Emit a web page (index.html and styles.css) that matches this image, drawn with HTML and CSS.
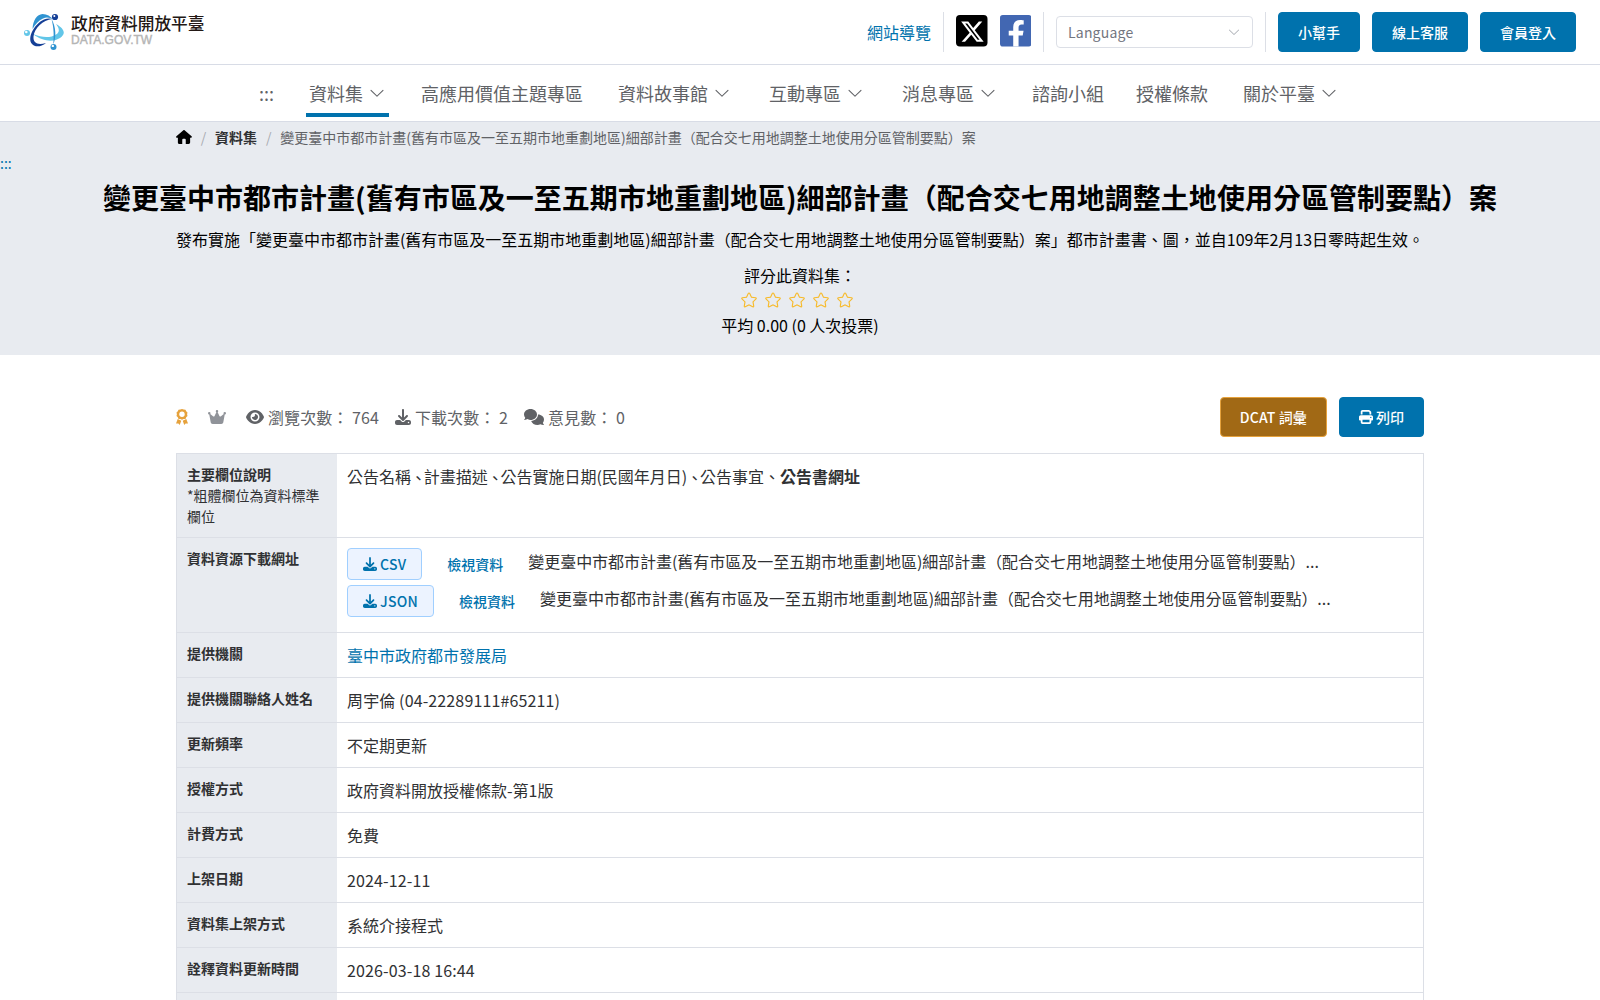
FILE: index.html
```html
<!DOCTYPE html>
<html lang="zh-Hant-TW">
<head>
    <meta charset="UTF-8">
    <meta name="viewport" content="width=device-width, initial-scale=1.0">
    <title>政府資料開放平臺</title>
    <link rel="stylesheet" href="styles.css">
</head>
<body>
    <!-- Shared icons -->
    <svg class="icon-defs" width="0" height="0" aria-hidden="true">
        <symbol id="icon-arrow" viewBox="0 0 1024 1024">
            <path d="M831.872 340.864 512 652.672 192.128 340.864a30.592 30.592 0 0 0-42.752 0 29.12 29.12 0 0 0 0 41.6L489.664 714.24a32 32 0 0 0 44.672 0l340.288-331.712a29.12 29.12 0 0 0 0-41.728 30.592 30.592 0 0 0-42.752 0z"/>
        </symbol>
        <symbol id="icon-download" viewBox="0 0 512 512">
            <path d="M288 32c0-17.7-14.3-32-32-32s-32 14.3-32 32V274.700l-73.400-73.400c-12.500-12.500-32.800-12.500-45.300 0s-12.500 32.800 0 45.300l128 128c12.500 12.500 32.800 12.500 45.300 0l128-128c12.500-12.500 12.500-32.800 0-45.300s-32.800-12.500-45.300 0L288 274.700V32zM64 352c-35.300 0-64 28.700-64 64v32c0 35.300 28.700 64 64 64H448c35.300 0 64-28.700 64-64V416c0-35.300-28.700-64-64-64H346.500l-45.300 45.300c-25 25-65.500 25-90.500 0L165.500 352H64zm368 56a24 24 0 1 1 0 48 24 24 0 1 1 0-48z"/>
        </symbol>
        <symbol id="icon-star" viewBox="0 0 1024 1024">
            <path d="m512 747.840 228.160 119.936a6.400 6.400 0 0 0 9.280-6.720l-43.520-254.080 184.512-179.904a6.400 6.400 0 0 0-3.520-10.880l-255.104-37.120L517.760 147.904a6.400 6.400 0 0 0-11.520 0L392.192 379.072l-255.104 37.120a6.400 6.400 0 0 0-3.520 10.880L318.080 606.976l-43.584 254.080a6.400 6.400 0 0 0 9.280 6.720L512 747.840zM313.600 924.480a70.400 70.400 0 0 1-102.144-74.240l37.888-220.928L88.960 472.960A70.400 70.400 0 0 1 128 352.896l221.760-32.256 99.200-200.960a70.400 70.400 0 0 1 126.208 0l99.200 200.960 221.824 32.256a70.400 70.400 0 0 1 39.040 120.064L774.720 629.376l37.888 220.928a70.400 70.400 0 0 1-102.144 74.240L512 820.096l-198.400 104.320z"/>
        </symbol>
    </svg>

    <header class="header">
        <a class="logo">
            <svg class="logo-mark" viewBox="0 0 40 38">
                <path d="M8.500 16C9 7 13 1.500 18.500 1c4.500 0 8 2 11 6-4-3-7.500-3-10.500-1.500C14.500 7.500 11.500 11 8.500 16z" fill="#2f93d1"/>
                <path d="M32 11c9 5 10 10 4 14-6 4-17 4-27-4 9 4 18 4 23 0.500 4-2.500 3.500-6 0-10.500z" fill="#62c6e8"/>
                <path d="M28 6C19 7 10.500 15 9.500 23.500c-.5 6.500 4 9 12.500 6.500-5 4-11 4.500-14 1C3 25 10 11 20 6.500c3-1.200 6-1.500 8-.5z" fill="#153f96"/>
                <path d="M27.500 6c4.500 8 5 18 1.800 25.500 0.700-8.500 0.700-16-1.800-25.500z" fill="#2f93d1"/>
                <circle cx="31" cy="4" r="3.100" fill="#153f96"/>
                <circle cx="3" cy="20" r="3" fill="#62c6e8"/>
                <circle cx="29.500" cy="34" r="3" fill="#2f93d1"/>
                <circle cx="30.300" cy="3" r="1" fill="#fff"/>
                <circle cx="2.300" cy="19" r="1.300" fill="#fff"/>
                <circle cx="28.800" cy="32.900" r="1.200" fill="#fff"/>
            </svg>
            <span class="logo-text">
                <span class="logo-name">政府資料開放平臺</span>
                <span class="logo-domain">DATA.GOV.TW</span>
            </span>
        </a>

        <div class="header-tools">
            <a class="link">網站導覽</a>
            <span class="divider"></span>
            <svg class="social" viewBox="0 0 448 448">
                <rect width="448" height="448" rx="56" fill="#000"/>
                <path d="M325 93h49L267 215.500 393 382h-98.700l-77.200-101.100L128.700 382h-49l114.500-131L73.300 93h101.200l69.800 92.300L325 93zm-17.100 259.700h27.100L159.700 120.700h-29.100l177.300 232z" fill="#fff"/>
            </svg>
            <svg class="social" viewBox="0 0 448 448">
                <rect width="448" height="448" rx="40" fill="#4267b2"/>
                <path d="M188 448V292h-64v-67h64v-52c0-66 38-101 97-101 28 0 52 4 52 4v60h-30c-32 0-43 20-43 41v48h71l-12 67h-59v156z" fill="#fff"/>
            </svg>
            <span class="divider"></span>
            <div class="language">
                <span>Language</span>
                <svg class="arrow"><use href="#icon-arrow"/></svg>
            </div>
            <span class="divider"></span>
            <button class="btn">小幫手</button>
            <button class="btn">線上客服</button>
            <button class="btn">會員登入</button>
        </div>
    </header>

    <nav class="nav">
        <a class="nav-item">:::</a>
        <a class="nav-item has-menu active">資料集<svg class="arrow"><use href="#icon-arrow"/></svg></a>
        <a class="nav-item">高應用價值主題專區</a>
        <a class="nav-item has-menu">資料故事館<svg class="arrow"><use href="#icon-arrow"/></svg></a>
        <a class="nav-item has-menu">互動專區<svg class="arrow"><use href="#icon-arrow"/></svg></a>
        <a class="nav-item has-menu">消息專區<svg class="arrow"><use href="#icon-arrow"/></svg></a>
        <a class="nav-item">諮詢小組</a>
        <a class="nav-item">授權條款</a>
        <a class="nav-item has-menu">關於平臺<svg class="arrow"><use href="#icon-arrow"/></svg></a>
    </nav>

    <section class="hero">
        <div class="breadcrumb container">
            <svg class="home" viewBox="0 0 576 512"><path d="M575.800 255.500c0 18-15 32.100-32 32.100h-32l.7 160.200c0 35-24 64.200-56 64.200H352V352c0-17.700-14.300-32-32-32h-64c-17.700 0-32 14.300-32 32v160H120c-35 0-56-28-56-56V287.600H32c-18 0-32-14-32-32.100 0-9 3-17 10-24L266.400 8c7-7 15-8 22-8s15 2 21 7l255.400 224.500c8 7 12 15 11 24z"/></svg>
            <span class="slash">/</span>
            <b>資料集</b>
            <span class="slash">/</span>
            <span>變更臺中市都市計畫(舊有市區及一至五期市地重劃地區)細部計畫（配合交七用地調整土地使用分區管制要點）案</span>
        </div>
        <a class="anchor">:::</a>
        <h1>變更臺中市都市計畫(舊有市區及一至五期市地重劃地區)細部計畫（配合交七用地調整土地使用分區管制要點）案</h1>
        <p class="summary">發布實施「變更臺中市都市計畫(舊有市區及一至五期市地重劃地區)細部計畫（配合交七用地調整土地使用分區管制要點）案」都市計畫書、圖，並自109年2月13日零時起生效。</p>
        <div class="rating">
            <p>評分此資料集：</p>
            <div class="stars">
                <svg><use href="#icon-star"/></svg>
                <svg><use href="#icon-star"/></svg>
                <svg><use href="#icon-star"/></svg>
                <svg><use href="#icon-star"/></svg>
                <svg><use href="#icon-star"/></svg>
            </div>
            <p>平均 0.00 (0 人次投票)</p>
        </div>
    </section>

    <main class="container">
        <div class="toolbar">
            <svg class="medal" viewBox="0 0 12 16">
                <path d="M6 0l1.700.6 1.800.1.700 1.600 1.300 1.300-.4 1.700.4 1.800-1.300 1.200-.7 1.600-1.800.2L6 10.700l-1.700-.6-1.800-.2-.7-1.600L.5 7.100l.4-1.800L.5 3.600l1.300-1.300L2.500.7l1.800-.1z"/>
                <path d="M1.700 10l3.600 1.700L3.700 16l-1.300-1.600-2.400.2zM10.300 10l-3.600 1.700L8.300 16l1.300-1.600 2.400.2z"/>
                <circle cx="6" cy="5.300" r="2.700" fill="#fff"/>
            </svg>
            <svg class="crown" viewBox="0 0 576 512"><path d="M309 106c11.400-7 19-19.700 19-34a40 40 0 1 0-80 0c0 14.400 7.600 27 19 34l-57.300 114.600c-9.100 18.200-32.700 23.400-48.600 10.700L72 160c5-6.700 8-15 8-24a40 40 0 1 0-40 40h.7L86.400 427.400c5.500 30.400 32 52.600 63 52.600h277.200c30.900 0 57.400-22.100 63-52.600L535.300 176h.7a40 40 0 1 0-40-40c0 9 3 17.300 8 24l-89.100 71.300c-15.900 12.700-39.500 7.500-48.600-10.700z"/></svg>
            <span class="stat">
                <svg class="eye" viewBox="0 0 576 512"><path d="M288 32c-81 0-146 37-193 80C49 156 18 208 3 244c-3 8-3 17 0 25 15 35 46 87 92 131 47 43 112 80 193 80s146-37 193-80c46-44 77-96 92-131 3-8 3-17 0-25-15-36-46-88-92-132-47-43-112-80-193-80zM144 256a144 144 0 1 1 288 0 144 144 0 1 1-288 0zm144-64c0 35-29 64-64 64-7 0-14-1-20-3-6-2-13 2-12 8 0 7 1 14 3 21 14 51 66 82 118 68s82-66 68-118c-11-42-48-69-89-71-7 0-11 6-9 12 3 6 5 13 5 19z"/></svg>
                瀏覽次數： 764
            </span>
            <span class="stat">
                <svg class="down"><use href="#icon-download"/></svg>
                下載次數： 2
            </span>
            <span class="stat">
                <svg class="comments" viewBox="0 0 640 512"><path d="M208 352c115 0 208-79 208-176S323 0 208 0 0 79 0 176c0 38 15 74 39 103-3 26-15 44-29 58-8 8-6 15 6 15 38 0 74-15 100-29 28 18 60 29 92 29zM448 176c0 112-99 196-219 207 24 74 107 129 203 129 34 0 64-9 92-24 26 13 62 24 100 24 14 0 20-8 10-18-14-14-26-31-29-55 22-28 35-62 35-101 0-89-82-161-192-162z"/></svg>
                意見數： 0
            </span>
            <button class="btn btn-dcat">DCAT 詞彙</button>
            <button class="btn"><svg class="printer" viewBox="0 0 512 512"><path d="M128 0C93 0 64 29 64 64v96h64V64h227l29 29v67h64V93c0-17-7-33-19-45L400 19C388 7 372 0 355 0H128zm256 352v96H128V352h256zm64 32h32c18 0 32-14 32-32V256c0-35-29-64-64-64H64c-35 0-64 29-64 64v96c0 18 14 32 32 32h32v64c0 35 29 64 64 64h256c35 0 64-29 64-64v-64zM432 248a24 24 0 1 1 0 48 24 24 0 1 1 0-48z"/></svg>列印</button>
        </div>

        <div class="table">
            <div class="row">
                <div class="label">主要欄位說明<small>*粗體欄位為資料標準欄位</small></div>
                <div class="value">公告名稱<span class="comma">､</span>計畫描述<span class="comma">､</span>公告實施日期(民國年月日)<span class="comma">､</span>公告事宜、<b>公告書網址</b></div>
            </div>
            <div class="row">
                <div class="label">資料資源下載網址</div>
                <div class="value">
                    <div class="resource">
                        <button class="btn-file"><svg><use href="#icon-download"/></svg>CSV</button>
                        <a class="view">檢視資料</a>
                        <span>變更臺中市都市計畫(舊有市區及一至五期市地重劃地區)細部計畫（配合交七用地調整土地使用分區管制要點）...</span>
                    </div>
                    <div class="resource">
                        <button class="btn-file"><svg><use href="#icon-download"/></svg>JSON</button>
                        <a class="view">檢視資料</a>
                        <span>變更臺中市都市計畫(舊有市區及一至五期市地重劃地區)細部計畫（配合交七用地調整土地使用分區管制要點）...</span>
                    </div>
                </div>
            </div>
            <div class="row">
                <div class="label">提供機關</div>
                <div class="value"><a class="link">臺中市政府都市發展局</a></div>
            </div>
            <div class="row">
                <div class="label">提供機關聯絡人姓名</div>
                <div class="value num">周宇倫 (04-22289111#65211)</div>
            </div>
            <div class="row">
                <div class="label">更新頻率</div>
                <div class="value">不定期更新</div>
            </div>
            <div class="row">
                <div class="label">授權方式</div>
                <div class="value">政府資料開放授權條款-第1版</div>
            </div>
            <div class="row">
                <div class="label">計費方式</div>
                <div class="value">免費</div>
            </div>
            <div class="row">
                <div class="label">上架日期</div>
                <div class="value num">2024-12-11</div>
            </div>
            <div class="row">
                <div class="label">資料集上架方式</div>
                <div class="value">系統介接程式</div>
            </div>
            <div class="row">
                <div class="label">詮釋資料更新時間</div>
                <div class="value num">2026-03-18 16:44</div>
            </div>
            <div class="row">
                <div class="label"></div>
                <div class="value"></div>
            </div>
        </div>
    </main>
</body>
</html>
```
FILE: styles.css
```css
* {
    box-sizing: border-box;
}

body {
    margin: 0;
    height: 100vh;
    overflow: hidden;
    font-family: "Noto Sans CJK TC", sans-serif;
    font-size: 16px;
    line-height: 24px;
    color: #303133;
    background-color: #fff;
}

h1,
p {
    margin: 0;
}

svg {
    fill: currentColor;
    flex-shrink: 0;
}

.icon-defs {
    position: absolute;
}

.container {
    width: 1248px;
    margin: 0 auto;
}

.link {
    color: #0072ad;
}

.num {
    letter-spacing: 0.13px;
}

.arrow {
    width: 18px;
    height: 18px;
}

/* Header */
.header {
    display: flex;
    justify-content: space-between;
    height: 65px;
    padding: 12px 24px;
    border-bottom: 1px solid #d8dce6;
}

.logo {
    display: flex;
    gap: 7px;
}

.logo-mark {
    width: 40px;
    height: 38px;
    margin-top: 1px;
}

.logo-text {
    display: flex;
    flex-direction: column;
}

.logo-name {
    font-size: 16.7px;
    font-weight: 500;
    line-height: 22px;
    color: #231815;
}

.logo-domain {
    font-family: "Liberation Sans", sans-serif;
    font-size: 12px;
    line-height: 12px;
    color: #b5b5b5;
    -webkit-text-stroke: 0.4px #b5b5b5;
}

.header-tools {
    display: flex;
    align-items: center;
    gap: 12px;
    height: 40px;
}

.divider {
    width: 1px;
    height: 40px;
    background-color: #dcdfe6;
}

.social {
    width: 31.5px;
    height: 31.5px;
    margin-bottom: 2px;
}

.language {
    display: flex;
    align-items: center;
    justify-content: space-between;
    width: 197px;
    height: 32px;
    padding: 0 11px;
    border: 1px solid #dcdfe6;
    border-radius: 4px;
    font-size: 14px;
    letter-spacing: 0.2px;
    color: #73767f;
}

.language .arrow {
    width: 14px;
    height: 14px;
    color: #a8abb2;
}

.btn {
    display: flex;
    align-items: center;
    gap: 3px;
    height: 40px;
    padding: 0 19px;
    border: 1px solid #0072ad;
    border-radius: 4px;
    background-color: #0072ad;
    color: #fff;
    font-family: inherit;
    font-size: 14px;
    font-weight: 500;
}

/* Main menu */
.nav {
    display: flex;
    justify-content: center;
    gap: 32px;
    height: 57px;
    border-bottom: 1px solid #d8dce6;
    font-size: 18px;
    color: #606266;
}

.nav-item {
    display: flex;
    align-items: center;
    height: 52px;
    padding-top: 8px;
    border-bottom: 4px solid transparent;
}

.has-menu {
    padding: 8px 3px 0;
}

.has-menu .arrow {
    margin-left: 5px;
}

.active {
    border-bottom-color: #0072ad;
}

/* Dataset title */
.hero {
    height: 233px;
    background-color: #e8ebf0;
    color: #000;
    text-align: center;
}

.breadcrumb {
    display: flex;
    align-items: center;
    height: 30px;
    font-size: 14px;
    line-height: 14px;
    color: #606266;
}

.breadcrumb b {
    color: #303133;
}

.home {
    width: 16px;
    height: 14px;
    color: #000;
}

.slash {
    margin: 0 8.800px;
    color: #a8abb2;
}

.anchor {
    display: block;
    height: 24px;
    font-size: 14px;
    line-height: 22px;
    text-align: left;
    color: #0072ad;
}

.hero h1 {
    font-size: 28px;
    font-weight: bold;
    letter-spacing: 0.02px;
    line-height: 42px;
    white-space: nowrap;
}

.summary {
    margin-top: 9px;
}

.rating {
    margin-top: 12px;
}

.stars {
    display: flex;
    justify-content: center;
    gap: 6px;
    height: 26px;
    padding-top: 4px;
    padding-right: 6px;
    color: #f7ba2a;
}

.stars svg {
    width: 18px;
    height: 18px;
}

/* Counters and actions */
.toolbar {
    display: flex;
    align-items: center;
    height: 40px;
    margin-top: 42px;
    margin-bottom: 16px;
    color: #606266;
}

.medal {
    width: 12px;
    height: 16px;
    margin-right: 20px;
    color: #e6a23c;
}

.crown {
    width: 18px;
    height: 16px;
    margin-right: 20px;
    color: #909399;
}

.stat {
    display: flex;
    align-items: center;
    gap: 4px;
    margin-right: 16px;
    letter-spacing: 0.08px;
}

.eye {
    width: 18px;
    height: 16px;
}

.down {
    width: 16px;
    height: 16px;
}

.comments {
    width: 20px;
    height: 16px;
}

.btn-dcat {
    margin-left: auto;
    margin-right: 12px;
    border-color: #e6a23c;
    background-color: #a16915;
    letter-spacing: 0.13px;
}

.printer {
    width: 14px;
    height: 14px;
}

/* Dataset details */
.table {
    border: 1px solid #dcdfe6;
}

.row {
    display: flex;
    min-height: 45px;
    border-bottom: 1px solid #dcdfe6;
}

.label {
    width: 160px;
    padding: 10px;
    background-color: #e8ebf0;
    font-size: 14px;
    font-weight: bold;
    line-height: 21px;
}

.label small {
    display: block;
    font-size: 14px;
    font-weight: normal;
}

.value {
    padding: 10px;
}

.comma {
    display: inline-block;
    padding-left: 4.700px;
    line-height: 16px;
    vertical-align: 4px;
}

.resource {
    display: flex;
    height: 37px;
}

.btn-file {
    display: flex;
    align-items: center;
    gap: 3px;
    height: 32px;
    padding: 0 15px;
    border: 1px solid #a0cfff;
    border-radius: 4px;
    background-color: #ecf3ff;
    color: #0072ad;
    font-family: inherit;
    font-size: 14px;
    font-weight: 500;
    letter-spacing: 0.25px;
}

.btn-file svg {
    width: 14px;
    height: 14px;
}

.view {
    padding: 0 25px;
    color: #0072ad;
    font-size: 14px;
    font-weight: 500;
    line-height: 32px;
}

.resource span {
    letter-spacing: -0.03px;
    line-height: 27px;
}
```
